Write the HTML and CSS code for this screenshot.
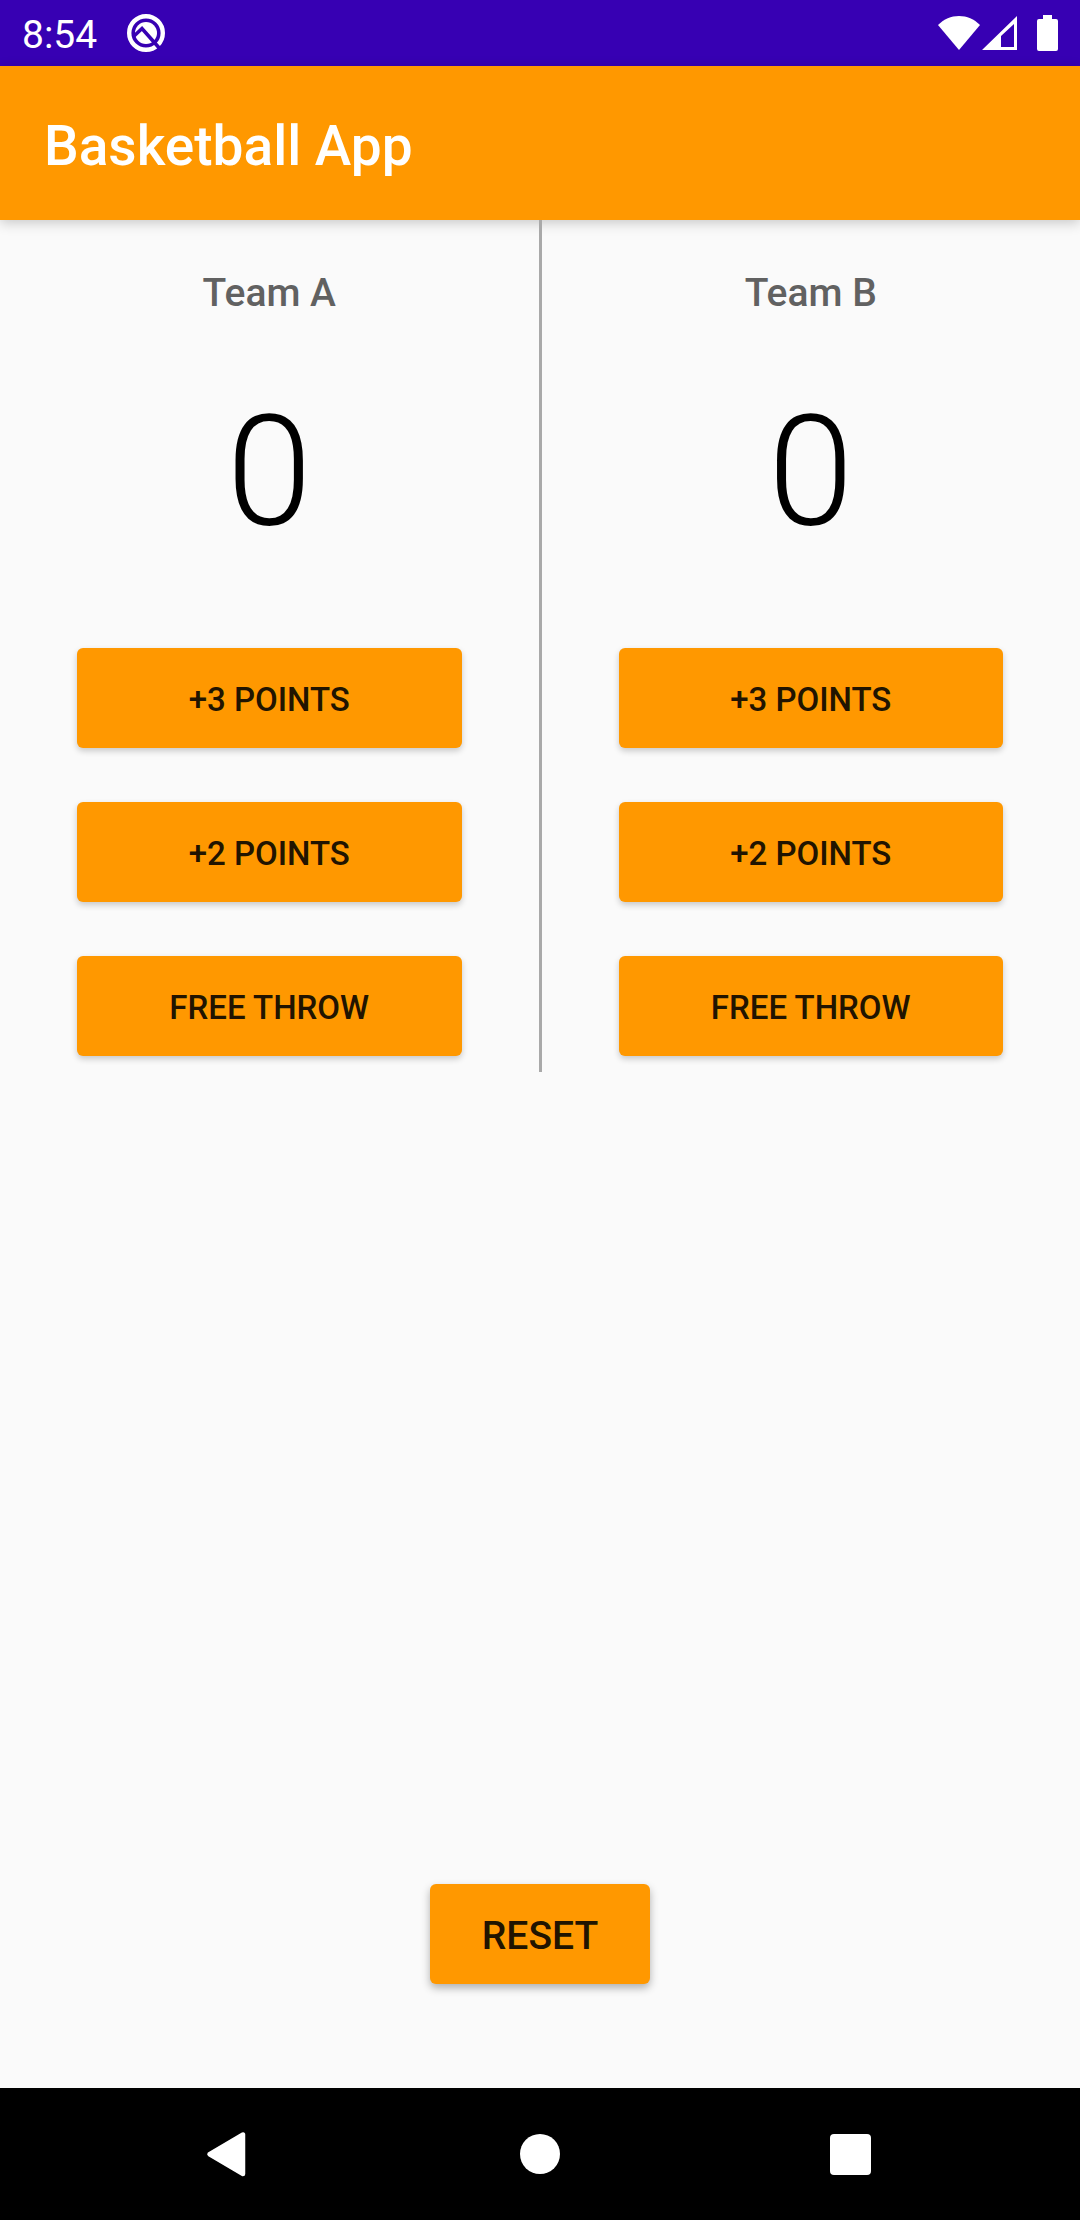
FILE: index.html
```html
<!DOCTYPE html>
<html lang="en">
<head>
<meta charset="utf-8">
<meta name="viewport" content="width=device-width, initial-scale=1">
<title>Basketball App</title>
<link rel="stylesheet" href="styles.css">
</head>
<body>
<div class="status-bar">
  <time class="clock">8:54</time>
  <svg class="status-icon notice" viewBox="0 0 38 38" aria-hidden="true">
    <circle cx="19" cy="19" r="16.800" fill="none" stroke="#fff" stroke-width="4.400"/>
    <circle cx="19" cy="19" r="11" fill="#fff"/>
    <path d="M6 23 15 14.500 34 36" fill="none" stroke="#3700b3" stroke-width="3.600"/>
  </svg>
  <div class="system-icons">
    <svg class="status-icon wifi" viewBox="0 0 42 36" aria-hidden="true"><path d="M21 35 0 10C6 4 13 1 21 1s15 3 21 9z" fill="#fff"/></svg>
    <svg class="status-icon signal" viewBox="0 0 35 36" aria-hidden="true"><path d="M35 1v34H0zM32 9 19 21v11h13z" fill="#fff" fill-rule="evenodd"/></svg>
    <svg class="status-icon battery" viewBox="0 0 21 36" aria-hidden="true"><path d="M6 0h9v4h4a2 2 0 0 1 2 2v28a2 2 0 0 1-2 2H2a2 2 0 0 1-2-2V6a2 2 0 0 1 2-2h4z" fill="#fff"/></svg>
  </div>
</div>
<header class="app-bar"><h1 class="app-title">Basketball App</h1></header>
<main class="content">
  <div class="scoreboard">
    <section class="team">
      <h2 class="team-name">Team A</h2>
      <output class="score">0</output>
      <button class="button" type="button">+3 POINTS</button>
      <button class="button" type="button">+2 POINTS</button>
      <button class="button" type="button">FREE THROW</button>
    </section>
    <div class="divider"></div>
    <section class="team">
      <h2 class="team-name">Team B</h2>
      <output class="score">0</output>
      <button class="button" type="button">+3 POINTS</button>
      <button class="button" type="button">+2 POINTS</button>
      <button class="button" type="button">FREE THROW</button>
    </section>
  </div>
  <button class="button button-reset" type="button">RESET</button>
</main>
<nav class="nav-bar">
  <button class="nav-button" type="button" aria-label="Back"><svg class="nav-icon" viewBox="0 0 48 48" aria-hidden="true"><path d="M37 4.500v39.500L3.500 24.250z" fill="#fff" stroke="#fff" stroke-width="4.500" stroke-linejoin="round"/></svg></button>
  <button class="nav-button" type="button" aria-label="Home"><svg class="nav-icon" viewBox="0 0 48 48" aria-hidden="true"><circle cx="24" cy="24" r="20" fill="#fff"/></svg></button>
  <button class="nav-button" type="button" aria-label="Recent apps"><svg class="nav-icon" viewBox="0 0 48 48" aria-hidden="true"><rect x="4" y="4" width="41" height="41" rx="4" fill="#fff"/></svg></button>
</nav>
</body>
</html>
```
FILE: styles.css
```css
* {
  box-sizing: border-box;
}

body {
  display: flex;
  flex-direction: column;
  min-height: 100vh;
  margin: 0;
  background: #fafafa;
  font-family: Roboto, "Noto Sans", sans-serif;
}

h1,
h2 {
  margin: 0;
  font-weight: 500;
}

button {
  border: 0;
  padding: 0;
  font-family: inherit;
}

.status-bar {
  display: flex;
  align-items: center;
  height: 66px;
  padding: 0 22px;
  background: #3700b3;
  color: #fff;
}

.clock {
  font-size: 39px;
  line-height: 66px;
  padding-top: 4px;
}

.status-icon {
  display: block;
  height: 36px;
}

.notice {
  width: 38px;
  height: 38px;
  margin-left: 30px;
}

.system-icons {
  display: flex;
  margin-left: auto;
}

.wifi {
  width: 42px;
}

.signal {
  width: 35px;
  margin-left: 2px;
}

.battery {
  width: 21px;
  margin-left: 20px;
}

.app-bar {
  display: flex;
  align-items: center;
  height: 154px;
  padding: 6px 44px 0;
  background: #ff9800;
  box-shadow: 0 3px 12px rgba(0, 0, 0, 0.2);
}

.app-title {
  color: #fff;
  font-size: 55px;
  line-height: 64px;
}

.content {
  display: flex;
  flex: 1;
  flex-direction: column;
  justify-content: space-between;
  align-items: center;
  padding-bottom: 104px;
}

.scoreboard {
  display: flex;
  width: 100%;
}

.team {
  display: flex;
  flex: 1;
  flex-direction: column;
  gap: 54px;
  padding: 44px 77px 16px;
}

.team-name {
  color: #616161;
  font-size: 39px;
  line-height: 58px;
  text-align: center;
}

.score {
  font-size: 154px;
  font-weight: 300;
  line-height: 194px;
  margin-bottom: 24px;
  text-align: center;
}

.divider {
  width: 3px;
  background: #a9a9a9;
}

.button {
  height: 100px;
  padding-top: 3px;
  border-radius: 6px;
  background: #ff9800;
  box-shadow: 0 3px 6px rgba(0, 0, 0, 0.2);
  color: #211400;
  font-size: 33px;
  font-weight: 500;
  line-height: 40px;
}

.button-reset {
  width: 220px;
  box-shadow: 0 4px 8px rgba(0, 0, 0, 0.3);
  font-size: 39px;
}

.nav-bar {
  display: grid;
  grid-template-columns: repeat(3, 1fr);
  height: 132px;
  padding: 0 75px;
  background: #000;
}

.nav-button {
  display: flex;
  align-items: center;
  justify-content: center;
  background: none;
}

.nav-icon {
  width: 48px;
  height: 48px;
}
```
